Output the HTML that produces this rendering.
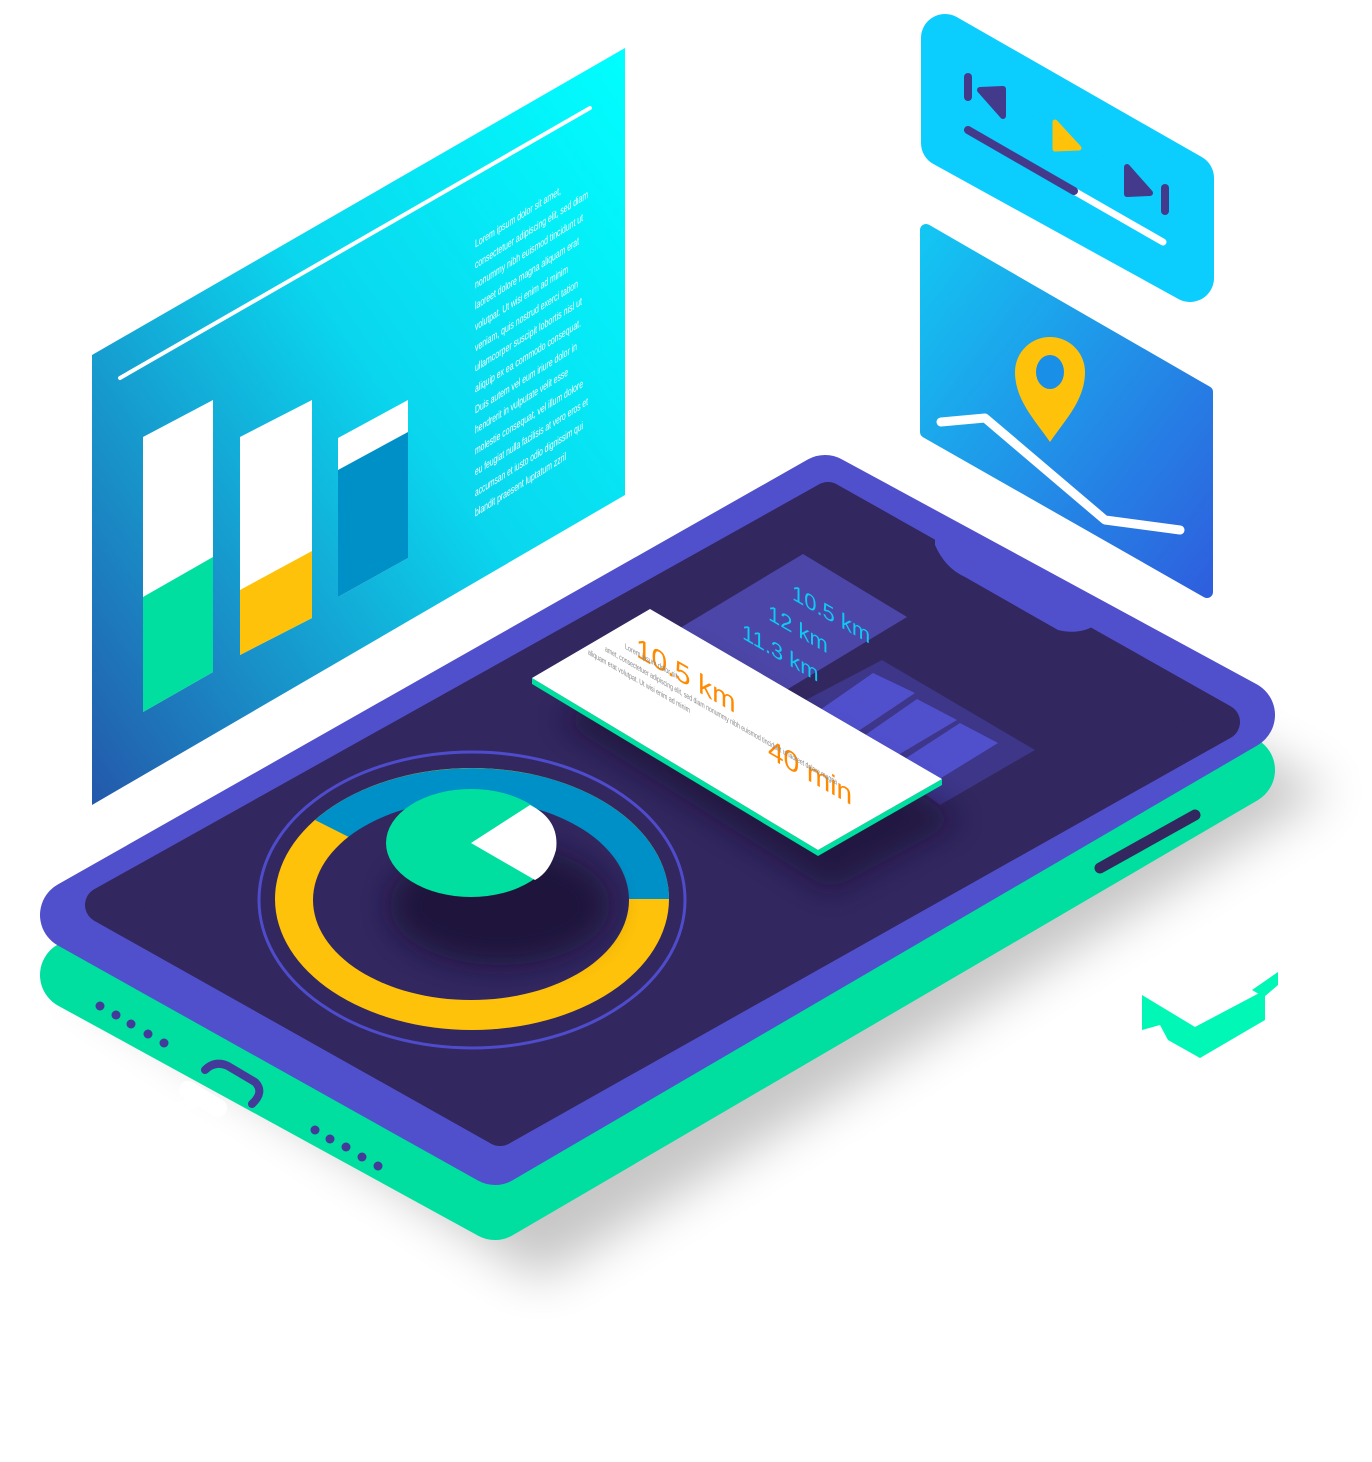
<!DOCTYPE html>
<html><head><meta charset="utf-8"><style>
html,body{margin:0;padding:0;background:#fff;}
svg{display:block}
</style></head><body>
<svg width="1372" height="1462" viewBox="0 0 1372 1462" xmlns="http://www.w3.org/2000/svg">
<defs>
<linearGradient id="gp" x1="1" y1="0" x2="0" y2="1">
<stop offset="0" stop-color="#00ffff"/><stop offset="0.45" stop-color="#0ad6ee"/><stop offset="1" stop-color="#2458aa"/>
</linearGradient>
<linearGradient id="gm" x1="0" y1="0" x2="1" y2="1">
<stop offset="0" stop-color="#13c6f2"/><stop offset="1" stop-color="#2e5fde"/>
</linearGradient>
<filter id="blur" x="-30%" y="-30%" width="160%" height="160%"><feGaussianBlur stdDeviation="25"/></filter>
<filter id="blur2" x="-30%" y="-30%" width="160%" height="160%"><feGaussianBlur stdDeviation="14"/></filter>
</defs>

<polygon points="70,975 850,540 1330,790 540,1280" fill="#000" opacity="0.22" filter="url(#blur)"/>

<polygon points="1142,995 1195,1027 1265,990 1265,1020 1200,1058 1168,1040 1160,1025 1142,1030" fill="#00f7b5"/>
<polygon points="1252,990 1278,972 1278,985 1264,997" fill="#00f7b5"/>

<polygon points="75,975 825,545 1240,770 495,1205" fill="#00df9f" stroke="#00df9f" stroke-width="70" stroke-linejoin="round"/>
<polygon points="75,915 825,490 1240,715 495,1150" fill="#5050cc" stroke="#5050cc" stroke-width="70" stroke-linejoin="round"/>
<polygon points="103,905 828,500 1222,722 500,1128" fill="#32275f" stroke="#32275f" stroke-width="36" stroke-linejoin="round"/>
<path d="M935,545 Q945,568 965,577 L1058,630 Q1082,636 1100,622 L1100,612 L935,528 Z" fill="#5050cc"/>

<line x1="150" y1="1125" x2="200" y2="1098" stroke="#fff" stroke-width="12"/>
<line x1="188" y1="1090" x2="218" y2="1108" stroke="#fff" stroke-width="18" stroke-linecap="round"/>

<g fill="#433a99">
<circle cx="100" cy="1006" r="4.5"/><circle cx="116" cy="1015" r="4.5"/><circle cx="131" cy="1024" r="4.5"/><circle cx="148" cy="1034" r="4.5"/><circle cx="164" cy="1043" r="4.5"/>
<circle cx="315" cy="1130" r="4.5"/><circle cx="330" cy="1139" r="4.5"/><circle cx="346" cy="1147" r="4.5"/><circle cx="362" cy="1157" r="4.5"/><circle cx="378" cy="1166" r="4.5"/>
</g>
<path d="M205,1070 Q215,1060 228,1066 L255,1082 Q265,1092 252,1104" fill="none" stroke="#433a99" stroke-width="8" stroke-linecap="round"/>
<line x1="1100" y1="868" x2="1195" y2="815" stroke="#32275f" stroke-width="11" stroke-linecap="round"/>

<polygon points="680,628 803,554 907,617 783,692" fill="#4c46a8"/>
<g font-family="Liberation Sans, sans-serif" font-size="22" fill="#0fc8f5" transform="matrix(1,0.577,0,1,0,0)">
<text x="792" y="142">10.5 km</text>
<text x="768" y="176">12 km</text>
<text x="742" y="210">11.3 km</text>
</g>
<polygon points="800,703 882,660 1035,750 940,805" fill="#3d3689"/>
<g fill="#5050cc">
<polygon points="817,712 873,673 915,693 857,732"/>
<polygon points="858,740 917,699 957,720 893,758"/>
<polygon points="900,762 960,723 998,743 933,783"/>
</g>

<polygon points="560,720 680,650 960,820 830,890" fill="#15102e" opacity="0.6" filter="url(#blur2)"/>
<polygon points="532,678 532,684 818,856 942,785 942,779 818,850" fill="#00df9f"/>
<polygon points="532,678 650,609 942,779 818,850" fill="#fff"/>
<g transform="matrix(1,0.577,0,1,0,0)" font-family="Liberation Sans, sans-serif">
<text x="636" y="289" font-size="28" fill="#ff8a00">10.5 km</text>
<text x="768" y="314" font-size="28" fill="#ff8a00">40 min</text>
<text x="625" y="288" font-size="8" fill="#888" textLength="52" lengthAdjust="spacingAndGlyphs">Lorem ipsum dolor sit</text>
<text x="605" y="302" font-size="8" fill="#888" textLength="232" lengthAdjust="spacingAndGlyphs">amet, consectetuer adipiscing elit, sed diam nonummy nibh euismod tincidunt ut laoreet dolore magna</text>
<text x="588" y="315" font-size="8" fill="#888" textLength="102" lengthAdjust="spacingAndGlyphs">aliquam erat volutpat. Ut wisi enim ad minim</text>
</g>

<ellipse cx="472" cy="900" rx="213" ry="148" fill="none" stroke="#4f4ccc" stroke-width="3"/>
<ellipse cx="472" cy="899" rx="197" ry="131" fill="#ffc20a"/>
<path d="M472,899 L315,820 A197,131 0 0 1 669,899 Z" fill="#0090c8"/>
<ellipse cx="471" cy="900" rx="158" ry="100" fill="#32275f"/>
<ellipse cx="500" cy="905" rx="110" ry="60" fill="#15102e" opacity="0.7" filter="url(#blur2)"/>
<ellipse cx="471" cy="843" rx="85" ry="54" fill="#00df9f"/>
<path d="M471,843 L530,805 Q560,820 556,850 Q550,872 535,880 Z" fill="#fff"/>

<polygon points="92,355 625,48 625,495 92,805" fill="url(#gp)"/>
<line x1="120" y1="378" x2="590" y2="108" stroke="#fff" stroke-width="4" stroke-linecap="round"/>
<polygon points="143,437 213,400 213,672 143,712" fill="#fff"/>
<polygon points="143,597 213,557 213,672 143,712" fill="#00df9f"/>
<polygon points="240,437 312,400 312,618 240,655" fill="#fff"/>
<polygon points="240,590 312,551 312,618 240,655" fill="#ffc20a"/>
<polygon points="338,438 408,400 408,558 338,597" fill="#fff"/>
<polygon points="338,470 408,432 408,558 338,597" fill="#0090c8"/>
<g transform="matrix(1,-0.63,0,1,0,0)" font-family="Liberation Sans, sans-serif" font-size="11" fill="#fff">
<text x="475" y="547" textLength="86" lengthAdjust="spacingAndGlyphs">Lorem ipsum dolor sit amet,</text>
<text x="475" y="568" textLength="113" lengthAdjust="spacingAndGlyphs">consectetuer adipiscing elit, sed diam</text>
<text x="475" y="588" textLength="108" lengthAdjust="spacingAndGlyphs">nonummy nibh euismod tincidunt ut</text>
<text x="475" y="609" textLength="104" lengthAdjust="spacingAndGlyphs">laoreet dolore magna aliquam erat</text>
<text x="475" y="630" textLength="93" lengthAdjust="spacingAndGlyphs">volutpat. Ut wisi enim ad minim</text>
<text x="475" y="651" textLength="103" lengthAdjust="spacingAndGlyphs">veniam, quis nostrud exerci tation</text>
<text x="475" y="671" textLength="107" lengthAdjust="spacingAndGlyphs">ullamcorper suscipit lobortis nisl ut</text>
<text x="475" y="692" textLength="106" lengthAdjust="spacingAndGlyphs">aliquip ex ea commodo consequat.</text>
<text x="475" y="713" textLength="102" lengthAdjust="spacingAndGlyphs">Duis autem vel eum iriure dolor in</text>
<text x="475" y="733" textLength="93" lengthAdjust="spacingAndGlyphs">hendrerit in vulputate velit esse</text>
<text x="475" y="754" textLength="108" lengthAdjust="spacingAndGlyphs">molestie consequat, vel illum dolore</text>
<text x="475" y="775" textLength="113" lengthAdjust="spacingAndGlyphs">eu feugiat nulla facilisis at vero eros et</text>
<text x="475" y="796" textLength="108" lengthAdjust="spacingAndGlyphs">accumsan et iusto odio dignissim qui</text>
<text x="475" y="816" textLength="91" lengthAdjust="spacingAndGlyphs">blandit praesent luptatum zzril</text>
</g>

<polygon points="945,38 1190,178 1190,278 945,143" fill="#0bcdfe" stroke="#0bcdfe" stroke-width="48" stroke-linejoin="round"/>
<line x1="968" y1="77" x2="968" y2="97" stroke="#433a8c" stroke-width="8" stroke-linecap="round"/>
<polygon points="980,90 1003,89 1003,116" fill="#433a8c" stroke="#433a8c" stroke-width="6" stroke-linejoin="round"/>
<line x1="1165" y1="188" x2="1165" y2="211" stroke="#433a8c" stroke-width="8" stroke-linecap="round"/>
<polygon points="1127,167 1150,193 1127,194" fill="#433a8c" stroke="#433a8c" stroke-width="6" stroke-linejoin="round"/>
<polygon points="1055,122 1079,148 1055,149" fill="#ffc20a" stroke="#ffc20a" stroke-width="5" stroke-linejoin="round"/>
<line x1="1074" y1="191" x2="1163" y2="242" stroke="#fff" stroke-width="7" stroke-linecap="round"/>
<line x1="968" y1="130" x2="1074" y2="191" stroke="#433a8c" stroke-width="8" stroke-linecap="round"/>

<polygon points="926,230 1207,392 1207,592 926,432" fill="url(#gm)" stroke="url(#gm)" stroke-width="12" stroke-linejoin="round"/>
<polyline points="941,422 985,418 1105,520 1180,530" fill="none" stroke="#fff" stroke-width="9" stroke-linecap="round" stroke-linejoin="round"/>
<path d="M1050,442 C1035,420 1015,400 1015,372 A35,35 0 0 1 1085,372 C1085,400 1065,420 1050,442 Z" fill="#ffc20a"/>
<ellipse cx="1050" cy="372" rx="14" ry="17" fill="#1a8fe8"/>
</svg>
</body></html>
